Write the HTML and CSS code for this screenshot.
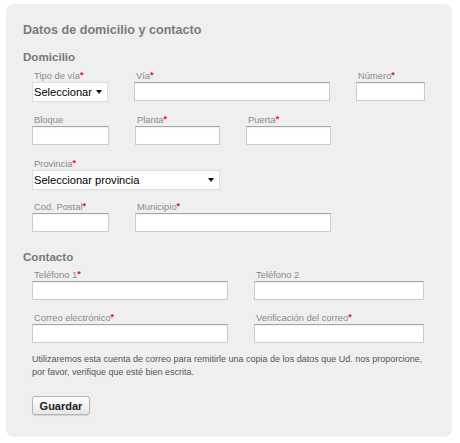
FILE: index.html
```html
<!DOCTYPE html>
<html lang="es">
<head>
<meta charset="utf-8">
<title>Datos de domicilio y contacto</title>
<link rel="stylesheet" href="styles.css">
</head>
<body>
<div class="panel">
  <h1 class="title">Datos de domicilio y contacto</h1>

  <h2 class="section">Domicilio</h2>
  <div class="fields">
    <div class="row row-first">
      <div class="field w-tipo">
        <label class="lbl">Tipo de vía<span class="req">*</span></label>
        <div class="sel"><select class="select"><option>Seleccionar</option></select></div>
      </div>
      <div class="field w-wide">
        <label class="lbl">Vía<span class="req">*</span></label>
        <input class="inp" type="text">
      </div>
      <div class="field w-num">
        <label class="lbl">Número<span class="req">*</span></label>
        <input class="inp" type="text">
      </div>
    </div>

    <div class="row">
      <div class="field w-short">
        <label class="lbl">Bloque</label>
        <input class="inp" type="text">
      </div>
      <div class="field w-mid">
        <label class="lbl">Planta<span class="req">*</span></label>
        <input class="inp" type="text">
      </div>
      <div class="field w-mid">
        <label class="lbl">Puerta<span class="req">*</span></label>
        <input class="inp" type="text">
      </div>
    </div>

    <div class="row row-prov">
      <div class="field w-prov">
        <label class="lbl">Provincia<span class="req">*</span></label>
        <div class="sel"><select class="select"><option>Seleccionar provincia</option></select></div>
      </div>
    </div>

    <div class="row row-cp">
      <div class="field w-short">
        <label class="lbl">Cod. Postal<span class="req">*</span></label>
        <input class="inp" type="text">
      </div>
      <div class="field w-wide">
        <label class="lbl">Municipio<span class="req">*</span></label>
        <input class="inp" type="text">
      </div>
    </div>
  </div>

  <h2 class="section section-contact">Contacto</h2>
  <div class="fields">
    <div class="row row-first-c">
      <div class="field w-wide">
        <label class="lbl">Teléfono 1<span class="req">*</span></label>
        <input class="inp" type="text">
      </div>
      <div class="field w-right">
        <label class="lbl">Teléfono 2</label>
        <input class="inp" type="text">
      </div>
    </div>
    <div class="row">
      <div class="field w-wide">
        <label class="lbl">Correo electrónico<span class="req">*</span></label>
        <input class="inp" type="text">
      </div>
      <div class="field w-right">
        <label class="lbl">Verificación del correo<span class="req">*</span></label>
        <input class="inp" type="text">
      </div>
    </div>

    <p class="note">Utilizaremos esta cuenta de correo para remitirle una copia de los datos que Ud. nos proporcione, por favor, verifique que esté bien escrita.</p>

    <button class="btn" type="button">Guardar</button>
  </div>
</div>
</body>
</html>
```

FILE: styles.css
```css
* { box-sizing: border-box; }

html, body {
  margin: 0;
  padding: 0;
  background: #ffffff;
}

body {
  font-family: "Liberation Sans", Arial, Helvetica, sans-serif;
  width: 460px;
  height: 443px;
  overflow: hidden;
}

.panel {
  margin: 4px 0 0 6px;
  width: 446px;
  height: 433px;
  background: #efefef;
  border-radius: 8px;
  padding: 19px 0 0 17px;
}

.title {
  margin: 0;
  font-size: 12.6px;
  line-height: 15px;
  font-weight: bold;
  color: #7b7b7b;
}

.section {
  margin: 12px 0 0 0;
  font-size: 11.6px;
  line-height: 14px;
  font-weight: bold;
  color: #787878;
}

.section-contact {
  margin-top: 18px;
}

.fields {
  margin-left: 9px;
}

.row {
  display: flex;
  gap: 26px;
  margin-top: 11px;
}

.row-first { margin-top: 5px; }
.row-prov { margin-top: 12px; }
.row-cp { margin-top: 10px; }
.row-first-c { margin-top: 4px; }

.field {
  display: flex;
  flex-direction: column;
}

.w-tipo { width: 76px; }
.w-short { width: 77px; }
.w-wide { width: 196px; }
.w-num { width: 69px; }
.w-mid { width: 85px; }
.w-prov { width: 188px; }
.w-right { width: 170px; }

.lbl {
  display: block;
  font-size: 9.4px;
  line-height: 13px;
  height: 13px;
  padding-left: 2px;
  color: #8a8a8a;
  white-space: nowrap;
}

.req {
  color: #e8141e;
  font-weight: bold;
  font-size: 9px;
  position: relative;
  top: -1px;
}

.inp {
  display: block;
  width: 100%;
  height: 19px;
  margin: 0;
  padding: 0 3px;
  background: #ffffff;
  border: 1px solid #cdcdcd;
  border-top-color: #a5a5a5;
  box-shadow: inset 0 1px 1px rgba(0, 0, 0, 0.06);
  font-family: inherit;
  font-size: 11px;
  outline: none;
}

.sel {
  position: relative;
  width: 100%;
}

.select {
  display: block;
  width: 100%;
  height: 20px;
  margin: 0;
  padding: 0 0 0 1px;
  -webkit-appearance: none;
  appearance: none;
  background: #ffffff;
  border: 1px solid #dedede;
  border-radius: 0;
  color: #000000;
  font-family: "Liberation Sans", Arial, Helvetica, sans-serif;
  font-size: 11.1px;
  line-height: 18px;
  outline: none;
}

.sel::after {
  content: "";
  position: absolute;
  right: 6px;
  top: 8px;
  width: 0;
  height: 0;
  border-left: 3px solid transparent;
  border-right: 3px solid transparent;
  border-top: 4px solid #111111;
  pointer-events: none;
}

.note {
  margin: 10px 0 0 0;
  font-size: 9px;
  line-height: 13px;
  color: #555555;
  width: 400px;
}

.btn {
  display: block;
  margin-top: 17px;
  width: 58px;
  height: 19px;
  padding: 0;
  border: 1px solid #b5b5b5;
  border-radius: 3px;
  background: linear-gradient(#ffffff, #e6e6e6);
  box-shadow: 0 1px 1px rgba(0, 0, 0, 0.12);
  font-family: "Liberation Sans", Arial, Helvetica, sans-serif;
  font-size: 11px;
  font-weight: bold;
  color: #222222;
}
```
